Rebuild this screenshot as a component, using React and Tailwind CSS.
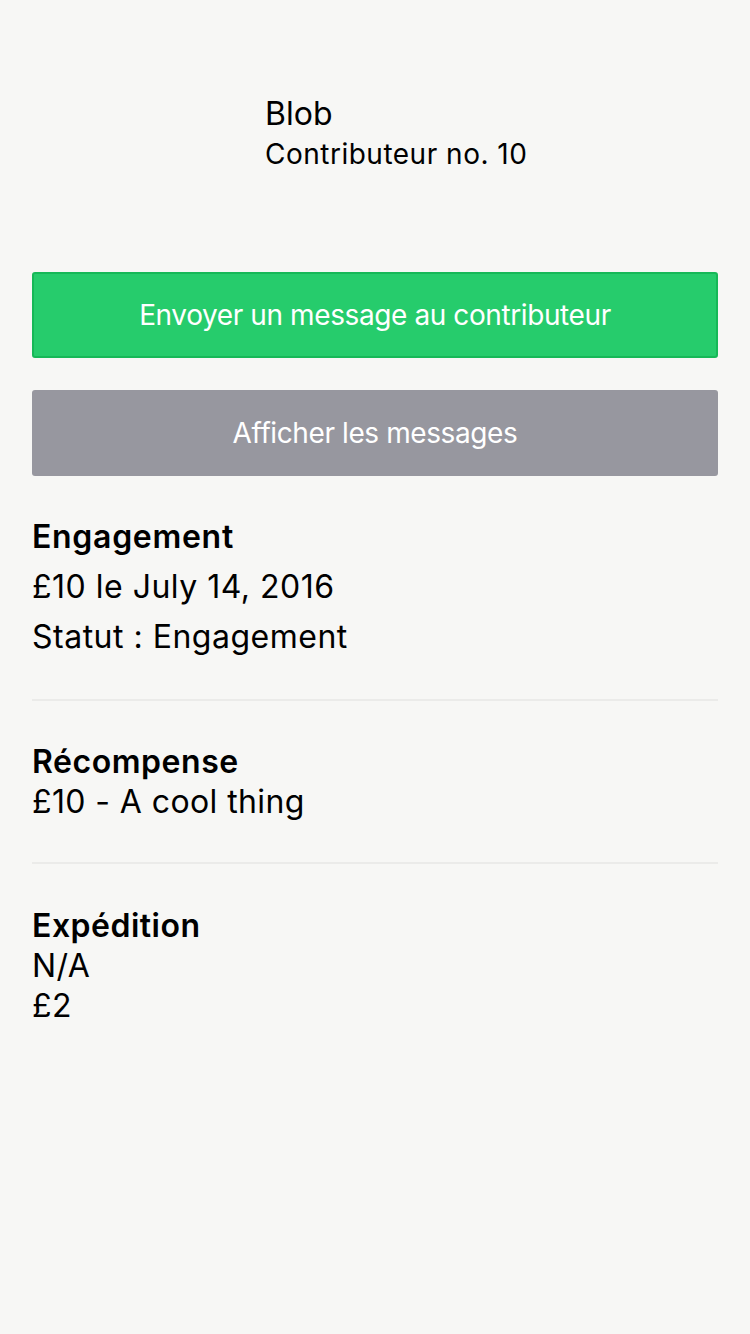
export default function App() {
  const font = { fontFamily: 'Inter, "Noto Sans", "Liberation Sans", sans-serif' };
  return (
    <div className="min-h-[1334px] w-[750px] bg-[#f7f7f5] text-black" style={font}>
      <div className="flex flex-col px-[32px]">
        {/* Header */}
        <div className="flex pt-[94px]">
          <div className="w-[233px] shrink-0" />
          <div className="flex flex-col">
            <div className="text-[32px] leading-[40px]">Blob</div>
            <div className="mt-[2px] text-[28px] leading-[36px] tracking-[0.5px]">Contributeur no. 10</div>
          </div>
        </div>

        {/* Buttons */}
        <button className="mt-[100px] flex h-[86px] w-full items-center justify-center rounded-[3px] border-2 border-[#16b857] bg-[#26cc6c] text-[28px] tracking-[-0.4px] text-white">
          Envoyer un message au contributeur
        </button>
        <button className="mt-[32px] flex h-[86px] w-full items-center justify-center rounded-[3px] bg-[#97979f] text-[28px] tracking-[-0.4px] text-white">
          Afficher les messages
        </button>

        {/* Engagement */}
        <div className="flex flex-col gap-[10px] pt-[41px] pb-[42px] text-[32px] leading-[40px] tracking-[0.5px]">
          <div className="font-semibold tracking-[0.7px]">Engagement</div>
          <div>£10 le July 14, 2016</div>
          <div>Statut : Engagement</div>
        </div>
        <div className="h-[2px] bg-[#ebebe9]" />

        {/* Récompense */}
        <div className="flex flex-col pt-[41px] pb-[40px] text-[32px] leading-[40px] tracking-[0.4px]">
          <div className="font-semibold tracking-[0.55px]">Récompense</div>
          <div>£10 - A cool thing</div>
        </div>
        <div className="h-[2px] bg-[#ebebe9]" />

        {/* Expédition */}
        <div className="flex flex-col pt-[42px] text-[32px] leading-[40px] tracking-[0.4px]">
          <div className="font-semibold tracking-[0.5px]">Expédition</div>
          <div>N/A</div>
          <div>£2</div>
        </div>
      </div>
    </div>
  );
}
